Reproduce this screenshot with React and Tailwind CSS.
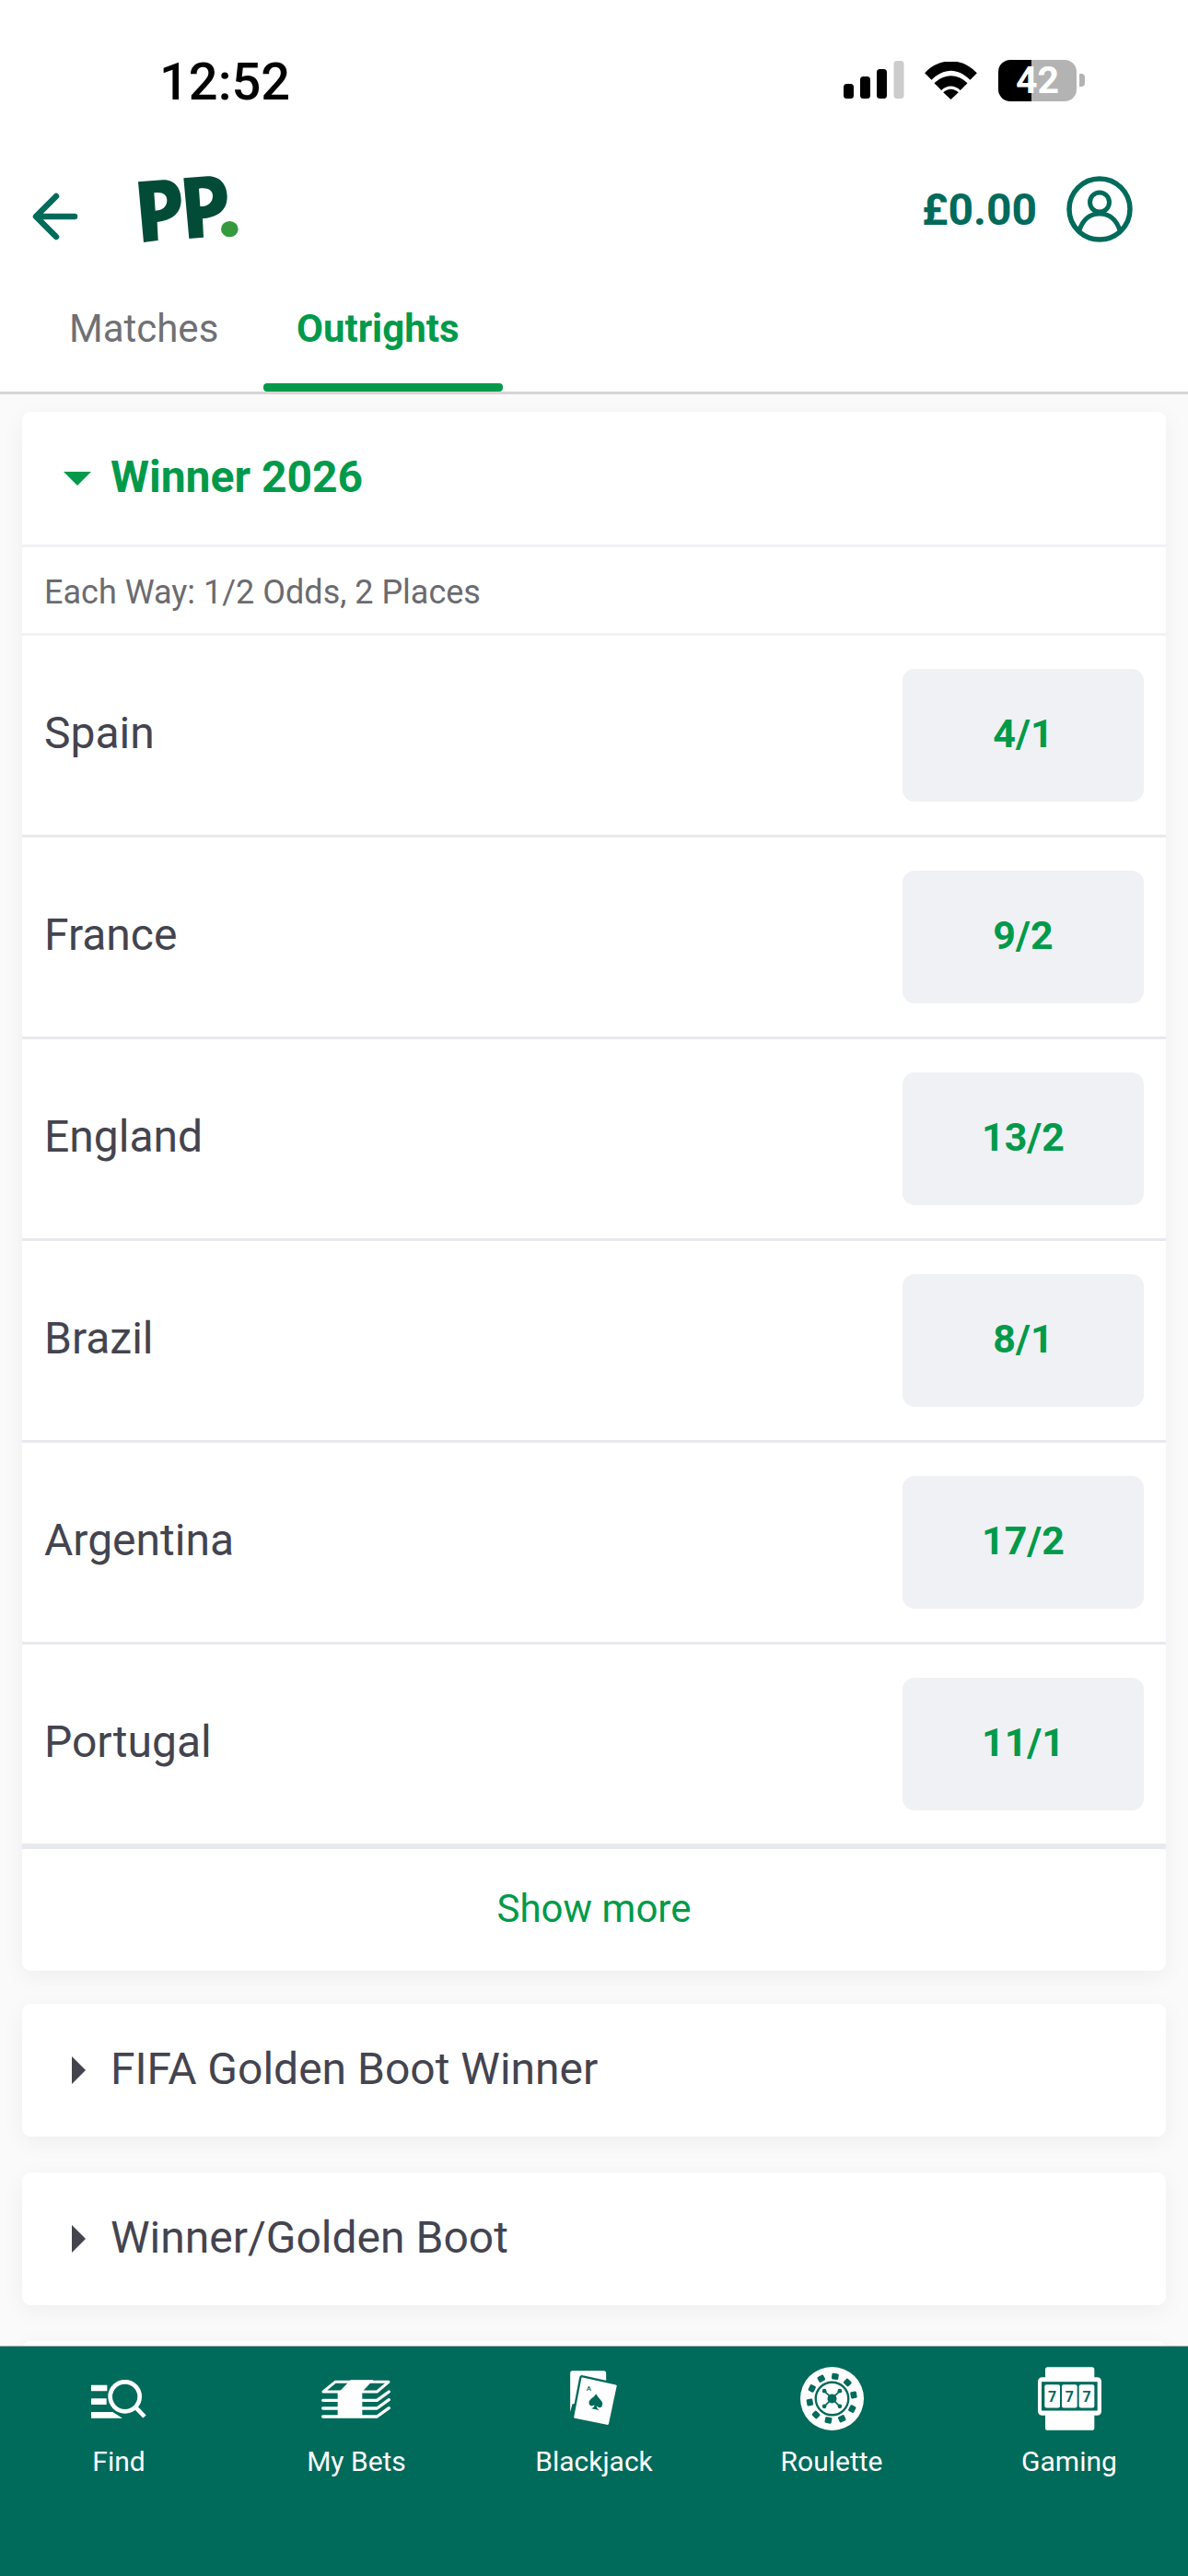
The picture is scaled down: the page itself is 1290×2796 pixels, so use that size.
import React from "react";

const rows = [
  ["Spain", "4/1"],
  ["France", "9/2"],
  ["England", "13/2"],
  ["Brazil", "8/1"],
  ["Argentina", "17/2"],
  ["Portugal", "11/1"],
];

function Signal() {
  return (
    <svg width="66" height="42" viewBox="0 0 66 42" className="block">
      <rect x="0" y="25" width="11" height="16" rx="3.5" fill="#000" />
      <rect x="18" y="17" width="11" height="24" rx="3.5" fill="#000" />
      <rect x="36" y="9" width="11" height="32" rx="3.5" fill="#000" />
      <rect x="54.5" y="0" width="11" height="41" rx="3.5" fill="#ccc" />
    </svg>
  );
}

function Wifi() {
  return (
    <svg width="57" height="41" viewBox="312 47 170 123" className="block">
      <path d="M312 84C360 32 434 32 482 84L460 106C420 66 374 66 334 106Z" fill="#000" />
      <path d="M343 117C375 85 419 85 451 117L428 140C410 122 384 122 366 140Z" fill="#000" />
      <path d="M372 147C388 133 406 133 422 147L397 170Z" fill="#000" />
    </svg>
  );
}

function Logo() {
  return (
    <svg width="150" height="100" viewBox="0 0 450 300" className="block">
      <path
        fillRule="evenodd"
        fill="#024b37"
        d="M60 52L140 46C180 44 200 75 200 112C200 155 170 178 122 183L125 243L78 249ZM112 88L116 146C140 146 154 132 154 112C154 94 140 84 112 88Z"
      />
      <path
        fillRule="evenodd"
        fill="#024b37"
        d="M208 40L285 34C325 32 350 60 350 100C350 145 320 168 270 172L273 233L226 237ZM258 74L262 132C285 134 303 120 303 98C303 80 288 70 258 74Z"
      />
      <ellipse cx="358" cy="206" rx="28" ry="26" fill="#359a3d" />
    </svg>
  );
}

function BackArrow() {
  return (
    <svg width="54" height="54" viewBox="0 0 54 54" className="block">
      <path d="M48 27H8M28 5L6 27L28 49" fill="none" stroke="#006a5b" strokeWidth="6.5" strokeLinecap="round" strokeLinejoin="round" />
    </svg>
  );
}

function Avatar() {
  return (
    <svg width="72" height="72" viewBox="0 0 72 72" className="block">
      <circle cx="36" cy="36" r="33" fill="none" stroke="#006a5b" strokeWidth="5.5" />
      <circle cx="36" cy="28.5" r="10.5" fill="none" stroke="#006a5b" strokeWidth="5" />
      <path d="M14 59C18 47 26 41 36 41C46 41 54 47 58 59" fill="none" stroke="#006a5b" strokeWidth="5" />
    </svg>
  );
}

function FindIcon() {
  return (
    <svg width="62" height="44" viewBox="27 52 186 132" className="block">
      <path d="M30 72H82V92H30ZM30 116H80V136H30ZM30 160H100L132 180H30Z" fill="#fff" />
      <circle cx="140" cy="110" r="48" fill="#006a5b" />
      <circle cx="140" cy="110" r="48" fill="none" stroke="#fff" strokeWidth="14" />
      <path d="M176 146L204 175" fill="none" stroke="#fff" strokeWidth="14" />
    </svg>
  );
}

function BetsIcon() {
  return (
    <svg width="78" height="44" viewBox="775 52 232 132" className="block">
      <path d="M783 94L822 62H996L958 94Z" fill="none" stroke="#fff" strokeWidth="9" strokeLinejoin="round" />
      <path d="M835 94L872 56H946L910 94V180H830V94Z" fill="#fff" />
      <path
        d="M782 122H830M782 148H830M782 175H830M910 122H958L997 94M910 148H958L997 120M910 175H958L997 147"
        fill="none"
        stroke="#fff"
        strokeWidth="10"
        strokeLinecap="round"
        strokeLinejoin="round"
      />
    </svg>
  );
}

function BlackjackIcon() {
  return (
    <svg width="54" height="63" viewBox="40 38 161 189" className="block">
      <path d="M50 42H152Q160 42 160 50V150H50L43 176V50Q43 42 50 42Z" fill="#fff" />
      <path d="M84 60L192 84Q199 86 198 92L172 214Q170 223 162 221L58 200Q50 198 52 190L76 66Q77 58 84 60Z" fill="#fff" stroke="#006a5b" strokeWidth="7" />
      <text x="96" y="107" fontFamily="Roboto, sans-serif" fontSize="24" fontWeight="500" fill="#006a5b">A</text>
      <path d="M127 117C135 133 151 140 148 153C146 165 133 163 129 156C129 162 132 166 138 170L112 165C118 163 122 159 122 153C116 159 104 157 104 146C104 134 120 131 127 117Z" fill="#006a5b" />
    </svg>
  );
}

const holes = [
  [150, 58],
  [105, 65],
  [190, 78],
  [75, 97],
  [210, 118],
  [68, 142],
  [205, 163],
  [88, 182],
  [172, 195],
  [128, 200],
];

function RouletteIcon() {
  return (
    <svg width="69" height="69" viewBox="37 27 206 206" className="block">
      <circle cx="140" cy="130" r="103" fill="#fff" />
      {holes.map(([x, y]) => {
        const angle = (Math.atan2(y - 130, x - 140) * 180) / Math.PI + 90;
        return (
          <rect key={x} x={x - 11} y={y - 10} width="22" height="20" rx="4" fill="#006a5b" transform={`rotate(${angle} ${x} ${y})`} />
        );
      })}
      <circle cx="140" cy="130" r="53" fill="none" stroke="#006a5b" strokeWidth="7" />
      <path d="M115 105L165 155M165 105L115 155" stroke="#006a5b" strokeWidth="5" />
      <circle cx="140" cy="130" r="15" fill="#006a5b" />
      <circle cx="115" cy="105" r="7" fill="#006a5b" />
      <circle cx="165" cy="105" r="7" fill="#006a5b" />
      <circle cx="115" cy="155" r="7" fill="#006a5b" />
      <circle cx="165" cy="155" r="7" fill="#006a5b" />
    </svg>
  );
}

function GamingIcon() {
  return (
    <svg width="69" height="69" viewBox="813 27 207 206" className="block">
      <rect x="837" y="27" width="160" height="50" rx="8" fill="#fff" />
      <rect x="837" y="170" width="160" height="63" rx="8" fill="#fff" />
      <rect x="813" y="60" width="207" height="125" rx="14" fill="#fff" />
      <rect x="825" y="75" width="182" height="94" fill="#006a5b" />
      {[835, 891, 947].map((x) => (
        <g key={x}>
          <rect x={x} y="84" width="50" height="76" rx="6" fill="#fff" />
          <text x={x + 25} y="140" textAnchor="middle" fontFamily="Roboto, sans-serif" fontSize="48" fontWeight="700" fill="#006a5b">7</text>
        </g>
      ))}
    </svg>
  );
}

const navItems = [
  ["Find", FindIcon],
  ["My Bets", BetsIcon],
  ["Blackjack", BlackjackIcon],
  ["Roulette", RouletteIcon],
  ["Gaming", GamingIcon],
];

function Collapsed({ title }) {
  return (
    <div className="mb-[39px] flex h-[144px] items-center rounded-[9px] bg-white pl-[54px] shadow-[0_6px_24px_rgba(0,0,0,0.05)]">
      <svg width="15" height="30" viewBox="0 0 15 30" className="block shrink-0">
        <path d="M0 0L15 15L0 30Z" fill="#44444f" />
      </svg>
      <span className="ml-[27px] pb-[2px] text-[48px] text-[#44444f]">{title}</span>
    </div>
  );
}

export default function App() {
  return (
    <div className="flex h-[2796px] w-[1290px] flex-col overflow-hidden bg-white font-[Roboto,sans-serif]">
      <div className="shrink-0 border-b-[3px] border-[#d5d5d5] bg-white">
        <div className="flex h-[174px] items-center pl-[173px] pr-[112px]">
          <span className="pt-[3px] text-[56px] font-medium leading-none text-black">12:52</span>
          <div className="ml-auto flex items-center">
            <Signal />
            <div className="ml-[22px]"><Wifi /></div>
            <div className="ml-[23px] flex h-[45px] w-[85px] items-center justify-center rounded-[13px] bg-[linear-gradient(90deg,#000_42%,#b3b3b3_42%)] text-[41px] font-bold leading-none text-white">42</div>
            <div className="ml-[3px] h-[14px] w-[6px] rounded-r-[4px] bg-[#b3b3b3]" />
          </div>
        </div>
        <div className="flex h-[106px] items-center pl-[33px] pr-[60px]">
          <div className="mt-[16px]"><BackArrow /></div>
          <div className="ml-[43px] mt-[6px]"><Logo /></div>
          <span className="ml-auto mt-[2px] text-[48px] font-bold leading-none text-[#006a5b]">£0.00</span>
          <div className="ml-[32px]"><Avatar /></div>
        </div>
        <div className="flex h-[145px] pl-[40px]">
          <div className="flex h-full w-[246px] flex-col pl-[35px]">
            <span className="mt-[53px] text-[42px] leading-[48px] text-[#707074]">Matches</span>
          </div>
          <div className="flex h-full w-[260px] flex-col">
            <span className="mt-[53px] pl-[36px] text-[42px] font-bold leading-[48px] text-[#009a4a]">Outrights</span>
            <div className="mt-auto h-[9px] rounded-[4px] bg-[#009a4a]" />
          </div>
        </div>
      </div>

      <div className="min-h-0 flex-1 overflow-hidden bg-[#fafafb] px-[24px] pt-[19px]">
        <div className="mb-[36px] rounded-[9px] bg-white shadow-[0_6px_24px_rgba(0,0,0,0.05)]">
          <div className="flex h-[147px] items-center border-b-[3px] border-[#f2f2f6] pl-[45px]">
            <svg width="30" height="15" viewBox="0 0 30 15" className="block shrink-0">
              <path d="M0 0H30L15 15Z" fill="#009a4a" />
            </svg>
            <span className="ml-[21px] pb-[2px] text-[48px] font-bold text-[#009a4a]">Winner 2026</span>
          </div>
          <div className="flex h-[96px] items-center border-b-[3px] border-[#f2f2f6] pl-[24px] pt-[4px] text-[36px] text-[#6b6b6f]">
            Each Way: 1/2 Odds, 2 Places
          </div>
          {rows.map(([name, odds], i) => (
            <div
              key={name}
              className={
                i === rows.length - 1
                  ? "flex h-[222px] items-center justify-between border-b-[6px] border-[#e8e9ed] pl-[24px] pr-[24px]"
                  : "flex h-[219px] items-center justify-between border-b-[3px] border-[#e8e9ed] pl-[24px] pr-[24px]"
              }
            >
              <span className="pb-[4px] text-[48px] text-[#44444f]">{name}</span>
              <div className="flex h-[144px] w-[262px] items-center justify-center rounded-[13px] bg-[#f0f1f5] pb-[4px] text-[43px] font-bold text-[#009a4a]">
                {odds}
              </div>
            </div>
          ))}
          <div className="flex h-[132px] items-center justify-center pb-[4px] text-[42px] text-[#009a4a]">Show more</div>
        </div>
        <Collapsed title="FIFA Golden Boot Winner" />
        <Collapsed title="Winner/Golden Boot" />
        <Collapsed title="" />
      </div>

      <div className="flex h-[250px] shrink-0 border-t border-[#a9a9a9] bg-[#006a5b]">
        {navItems.map(([label, Icon]) => (
          <div key={label} className="flex flex-1 flex-col items-center pt-[22px]">
            <div className="flex h-[69px] items-center justify-center"><Icon /></div>
            <span className="mt-[16px] text-[30px] leading-[36px] text-white">{label}</span>
          </div>
        ))}
      </div>
    </div>
  );
}
